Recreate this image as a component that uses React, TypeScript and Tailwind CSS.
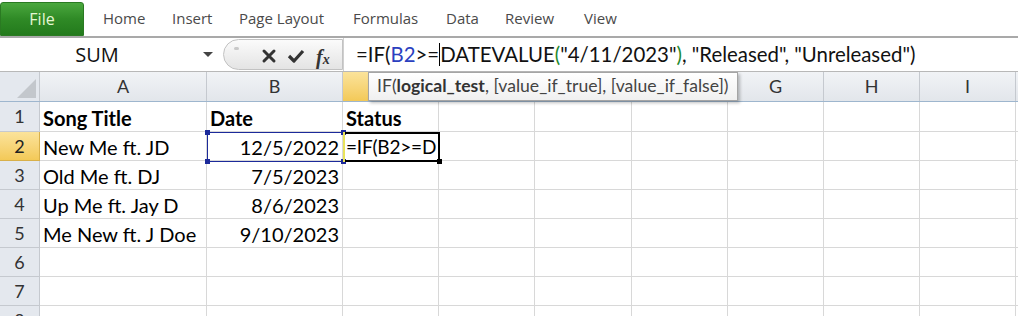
import React from "react";

const cols = [
  { name: "A", w: 167 },
  { name: "B", w: 136 },
  { name: "C", w: 96 },
  { name: "D", w: 96 },
  { name: "E", w: 97 },
  { name: "F", w: 96 },
  { name: "G", w: 96 },
  { name: "H", w: 96 },
  { name: "I", w: 96 },
  { name: "J", w: 96 },
];

// letters under the function tooltip (and off-screen) are not shown
const hiddenLetters = ["C", "D", "E", "F", "J"];

const rows: { a?: string; b?: string; c?: string; bold?: boolean }[] = [
  { a: "Song Title", b: "Date", c: "Status", bold: true },
  { a: "New Me ft. JD", b: "12/5/2022" },
  { a: "Old Me ft. DJ", b: "7/5/2023" },
  { a: "Up Me ft. Jay D", b: "8/6/2023" },
  { a: "Me New ft. J Doe", b: "9/10/2023" },
  {},
  {},
  {},
];

const tabs = [
  { label: "Home", w: "w-[69px]" },
  { label: "Insert", w: "w-[67px]" },
  { label: "Page Layout", w: "w-[114px]" },
  { label: "Formulas", w: "w-[93px]" },
  { label: "Data", w: "w-[59px]" },
  { label: "Review", w: "w-[79px]" },
  { label: "View", w: "w-[60px]" },
];

const cellFont = { fontFamily: "Lato, 'Open Sans', sans-serif" };

function Corner({ color, className }: { color: string; className: string }) {
  return <div className={`absolute w-[5px] h-[5px] ${color} ${className}`} />;
}

export default function App() {
  return (
    <div className="w-[1018px] h-[316px] overflow-hidden bg-white relative select-none">
      {/* Ribbon tabs */}
      <div className="h-[36px] flex items-start" style={{ fontFamily: "'Open Sans', sans-serif" }}>
        <div className="w-[84px] h-[34px] mt-[2px] rounded-t-[3px] bg-gradient-to-b from-[#4aa83e] via-[#2f8a26] to-[#237a1c] border border-[#2a7a22] flex items-center justify-center text-[16px] text-[#e4f7d4]">
          File
        </div>
        <div className="flex items-center h-[36px] pl-[19px] text-[15px] text-[#4a4a4a]">
          {tabs.map((t) => (
            <div key={t.label} className={t.w}>
              {t.label}
            </div>
          ))}
        </div>
      </div>
      <div className="h-[2px] bg-[#a9a9a9]" />

      {/* Formula bar */}
      <div className="h-[34px] flex items-stretch border-b border-[#b8b8b8] bg-white" style={cellFont}>
        <div className="w-[220px] flex items-center">
          <div className="w-[194px] text-center text-[20px] text-[#111]" style={{ fontFamily: "'Open Sans', sans-serif" }}>
            SUM
          </div>
          <div className="ml-[9px] w-0 h-0 border-l-[5px] border-r-[5px] border-t-[5px] border-l-transparent border-r-transparent border-t-[#444]" />
        </div>
        <div className="w-[3px]" />
        <div className="w-[120px] my-[1px] rounded-l-full border border-[#c2c2c2] bg-gradient-to-b from-[#fbfbfb] to-[#e4e4e4] relative flex items-center">
          <div className="absolute left-[10px] top-[7px] w-[5px] h-[3px] rounded-full bg-[#c9c9c9]" />
          <svg className="absolute left-[37px] top-[8px]" width="16" height="16" viewBox="0 0 16 16">
            <path d="M3 3 L13 13 M13 3 L3 13" stroke="#333" strokeWidth="3" strokeLinecap="round" />
          </svg>
          <svg className="absolute left-[63px] top-[8px]" width="18" height="16" viewBox="0 0 18 16">
            <path d="M2 8 L7 13 L16 3" stroke="#333" strokeWidth="3.2" fill="none" strokeLinejoin="round" />
          </svg>
          <span
            className="absolute left-[92px] top-[2px] text-[20px] italic font-bold text-[#333]"
            style={{ fontFamily: "'Liberation Serif', serif" }}
          >
            f<span className="text-[14px]">x</span>
          </span>
        </div>
        <div className="w-[1px] bg-[#d0d0d0]" />
        <div className="flex-1 flex items-center pl-[12px] text-[20.4px] text-[#111] whitespace-nowrap">
          <span>=IF(</span>
          <span className="text-[#2b3fbf]">B2</span>
          <span>&gt;=</span>
          <span className="inline-block w-[1px] h-[23px] bg-black" />
          <span>DATEVALUE</span>
          <span className="text-[#1f8a2e]">(</span>
          <span>"4/11/2023"</span>
          <span className="text-[#1f8a2e]">)</span>
          <span>, "Released", "Unreleased")</span>
        </div>
      </div>

      {/* Grid */}
      <div className="relative" style={cellFont}>
        {/* column headers */}
        <div className="flex h-[30px] border-b border-[#9eb6ce]">
          <div className="w-[40px] shrink-0 relative bg-[#e4e8ee] border-r border-[#c5c9cf]">
            <svg className="absolute right-[3px] bottom-[3px]" width="19" height="19" viewBox="0 0 19 19">
              <path d="M19 0 L19 19 L0 19 Z" fill="#c3c7cc" />
            </svg>
          </div>
          {cols.map((c) => (
            <div
              key={c.name}
              style={{ width: c.w }}
              className={`shrink-0 flex items-center justify-center text-[18px] text-[#333] border-r border-[#c5c9cf] ${
                c.name === "C"
                  ? "bg-gradient-to-b from-[#fbe39a] to-[#f3c957]"
                  : "bg-gradient-to-b from-[#f1f3f6] to-[#e2e6eb]"
              }`}
            >
              {hiddenLetters.includes(c.name) ? "" : c.name}
            </div>
          ))}
        </div>

        {rows.map((r, i) => (
          <div key={i} className={`flex ${i === 0 ? "h-[30px]" : "h-[29px]"}`}>
            <div
              className={`w-[40px] shrink-0 flex items-center justify-center text-[18px] border-r border-b ${
                i === 1
                  ? "bg-gradient-to-b from-[#fbe39a] to-[#f3c957] text-[#222] border-[#d8b04a]"
                  : "bg-[#e4e8ee] text-[#333] border-[#c5c9cf]"
              }`}
            >
              {i + 1}
            </div>
            {cols.map((c, j) => {
              let text = "";
              if (j === 0) text = r.a ?? "";
              if (j === 1) text = r.b ?? "";
              if (j === 2) text = r.c ?? "";
              const right = j === 1 && !r.bold;
              const editing = i === 1 && j === 2;
              return (
                <div
                  key={c.name}
                  style={{ width: c.w }}
                  className={`shrink-0 flex items-center border-r border-b border-[#d8d8d8] pt-[2px] text-black whitespace-nowrap overflow-hidden ${
                    editing ? "pl-[3px] text-[19px] tracking-[-0.2px]" : "px-[3px] text-[20px]"
                  } ${right ? "justify-end" : "justify-start"} ${r.bold ? "font-bold" : ""}`}
                >
                  {editing ? "=IF(B2>=D" : text}
                </div>
              );
            })}
          </div>
        ))}

        {/* B2 reference highlight */}
        <div className="absolute left-[207px] top-[60px] w-[137px] h-[30px] border border-[#1c2a9a] pointer-events-none">
          <Corner color="bg-[#1c2a9a]" className="-left-[3px] -top-[3px]" />
          <Corner color="bg-[#1c2a9a]" className="-left-[3px] -bottom-[3px]" />
          <Corner color="bg-[#1c2a9a]" className="-right-[3px] -top-[3px]" />
          <Corner color="bg-[#1c2a9a]" className="-right-[3px] -bottom-[3px]" />
        </div>
        {/* active cell C2 */}
        <div className="absolute left-[343px] top-[60px] w-[97px] h-[30px] border-2 border-black pointer-events-none">
          <div className="absolute -left-[2px] -top-[2px] w-[2px] h-[30px] bg-[#e9e35a]" />
          <Corner color="bg-black" className="-right-[4px] -bottom-[4px]" />
        </div>
      </div>

      {/* Function tooltip */}
      <div
        className="absolute left-[368px] top-[72px] h-[29px] px-[8px] flex items-center border border-[#a5a5a5] bg-gradient-to-b from-white to-[#f0f0f0] shadow-[2px_2px_3px_rgba(0,0,0,0.25)] text-[17.6px] text-[#444] whitespace-nowrap"
        style={cellFont}
      >
        IF(<span className="font-bold text-[#333]">logical_test</span>, [value_if_true], [value_if_false])
      </div>
    </div>
  );
}
